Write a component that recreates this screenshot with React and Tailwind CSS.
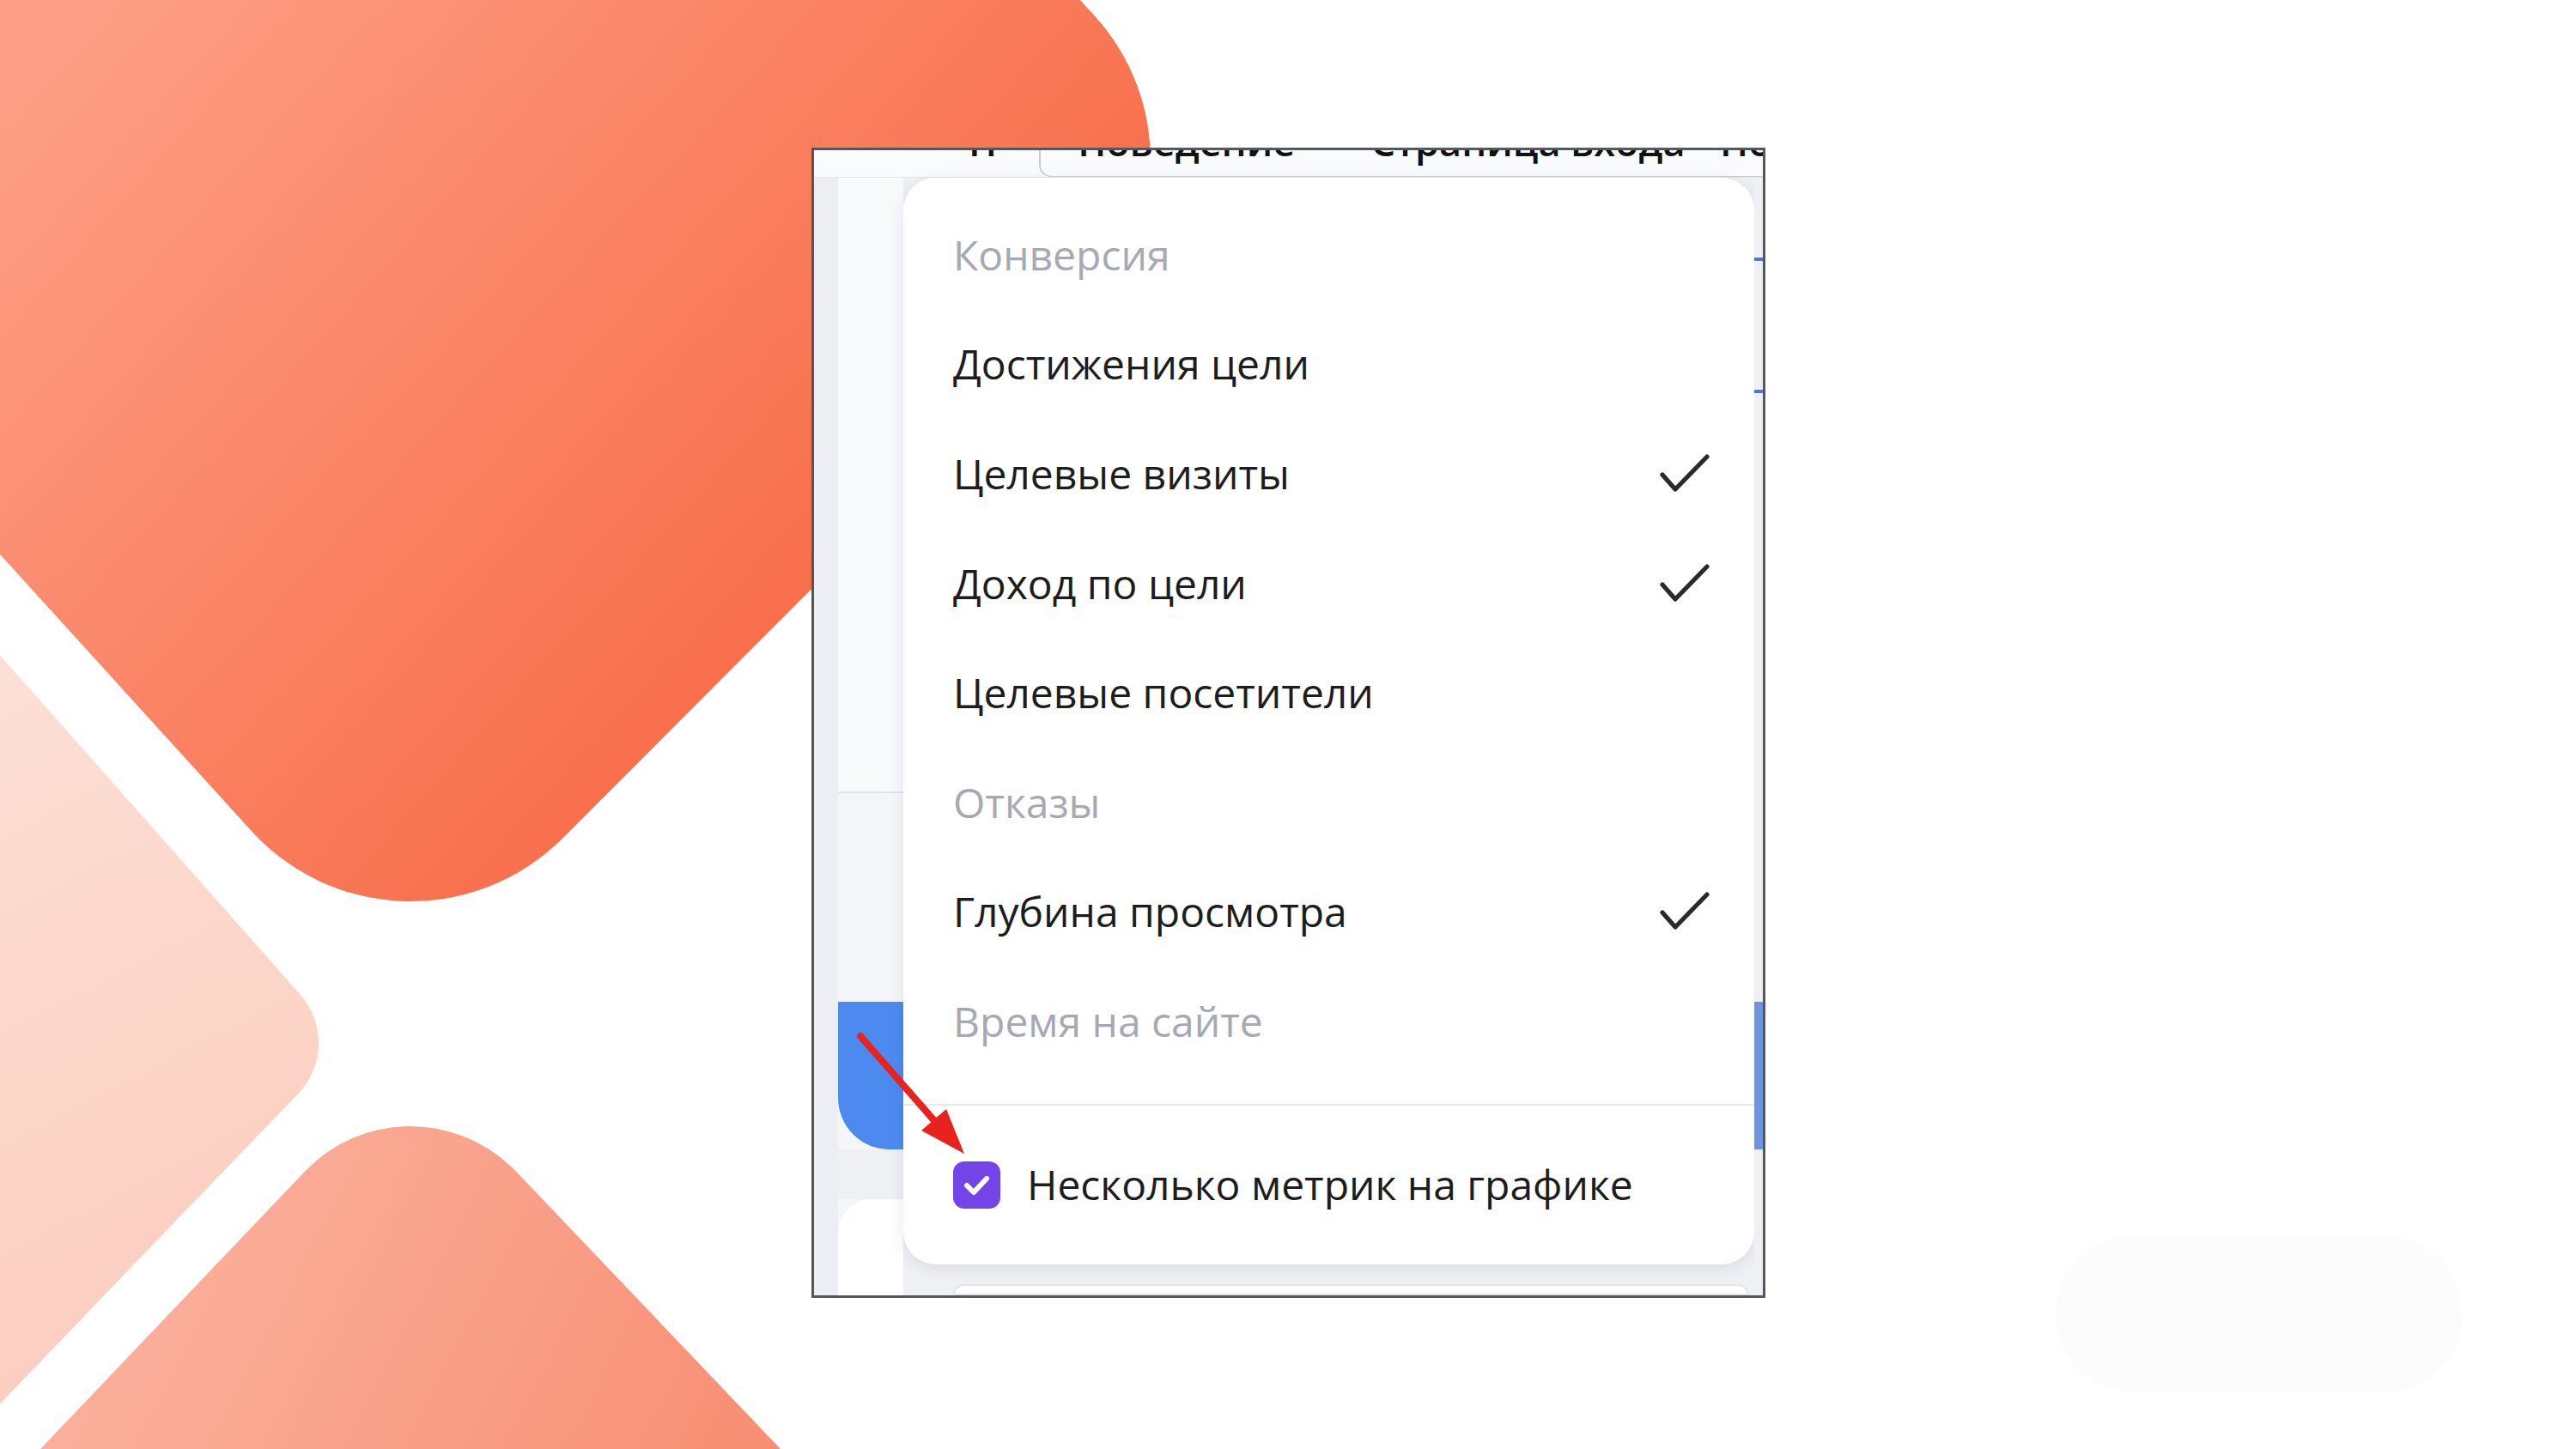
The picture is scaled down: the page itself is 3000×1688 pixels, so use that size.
import React from "react";

const items = [
  { t: "Конверсия", h: true },
  { t: "Достижения цели" },
  { t: "Целевые визиты", c: true },
  { t: "Доход по цели", c: true },
  { t: "Целевые посетители" },
  { t: "Отказы", h: true },
  { t: "Глубина просмотра", c: true },
  { t: "Время на сайте", h: true },
];

function Check() {
  return (
    <svg width="58" height="48" viewBox="0 0 29 24" fill="none">
      <polyline points="1.5,12.5 9,21 27.5,2" stroke="#2a2a2e" strokeWidth="2.6" strokeLinecap="round" strokeLinejoin="round" />
    </svg>
  );
}

function Background() {
  return (
    <svg className="absolute inset-0" width="3000" height="1688" viewBox="0 0 3000 1688">
      <defs>
        <linearGradient id="g1" gradientUnits="userSpaceOnUse" x1="100" y1="0" x2="1100" y2="900">
          <stop offset="0" stopColor="#fd9f86" />
          <stop offset="1" stopColor="#f7633d" />
        </linearGradient>
        <linearGradient id="g2" gradientUnits="userSpaceOnUse" x1="0" y1="700" x2="420" y2="1500">
          <stop offset="0" stopColor="#fde1d8" />
          <stop offset="1" stopColor="#fbccbe" />
        </linearGradient>
        <linearGradient id="g3" gradientUnits="userSpaceOnUse" x1="150" y1="1300" x2="900" y2="1688">
          <stop offset="0" stopColor="#fbb4a1" />
          <stop offset="1" stopColor="#f78e72" />
        </linearGradient>
      </defs>
      <polygon points="478,800 1090,187 81,-923 -531,-310" fill="url(#g1)" stroke="url(#g1)" strokeWidth="500" strokeLinejoin="round" />
      <polygon points="286,1215 -662,143 -1500,1215 -659,2198" fill="url(#g2)" stroke="url(#g2)" strokeWidth="170" strokeLinejoin="round" />
      <polygon points="478,1482 1478,2532 -522,2532" fill="url(#g3)" stroke="url(#g3)" strokeWidth="340" strokeLinejoin="round" />
      <rect x="2394" y="1440" width="474" height="182" rx="90" fill="#fcfcfc" />
    </svg>
  );
}

const crumb = "text-[45px] leading-[46px] font-semibold -mt-[33px]";

export default function App() {
  return (
    <div className="relative w-[3000px] h-[1688px] overflow-hidden bg-white font-['Open_Sans','Noto_Sans',sans-serif]">
      <Background />
      <div className="relative pl-[945px] pt-[172px]">
        <div className="w-[1111px] h-[1340px] border-[3px] border-[#54585c] bg-[#eef0f4] flex flex-col overflow-hidden">
          {/* top band with cut-off breadcrumb */}
          <div className="h-[32px] shrink-0 bg-[#fafbfc] border-b border-[#e3e5e9] flex overflow-hidden pl-[180px]">
            <span className={crumb + " text-[#111]"}>П</span>
            <div className="ml-[49px] h-[31px] border-l-2 border-b border-[#c9ccd1] rounded-bl-[14px] pl-[43px] flex whitespace-nowrap">
              <span className={crumb + " text-[#111]"}>Поведение</span>
              <span className={crumb + " text-[#888] ml-[38px]"}>·</span>
              <span className={crumb + " text-[#111] ml-[38px]"}>Страница входа</span>
              <span className={crumb + " text-[#888] ml-[14px]"}>·</span>
              <span className={crumb + " text-[#111] ml-[14px]"}>По</span>
            </div>
          </div>

          <div className="flex flex-1 min-h-0">
            {/* left strip */}
            <div className="w-[104px] shrink-0 flex">
              <div className="w-[28px] bg-[#eceef3]" />
              <div className="w-[76px] flex flex-col bg-[#f5f6f9]">
                <div className="h-[717px] shrink-0 bg-[#f8f9fb] border-b-2 border-[#e1e3e8]" />
                <div className="h-[243px] shrink-0" />
                <div className="h-[172px] shrink-0 bg-[#4d8af0] rounded-bl-[60px]" />
                <div className="h-[58px] shrink-0 bg-[#eef0f4]" />
                <div className="flex-1 bg-white rounded-tl-[40px]" />
              </div>
            </div>

            {/* card column */}
            <div className="w-[991px] shrink-0 flex flex-col">
              <div className="h-[1266px] shrink-0 bg-white rounded-[38px] shadow-[0_4px_18px_rgba(40,50,80,0.10)] flex flex-col pt-[26px]">
                {items.map((it) => (
                  <div key={it.t} className="h-[127.6px] shrink-0 flex items-center justify-between pl-[58px] pr-[52px]">
                    <span className={"text-[48px] font-medium leading-none " + (it.h ? "text-[#a6a9b3]" : "text-[#1d1d20]")}>{it.t}</span>
                    {it.c ? <Check /> : null}
                  </div>
                ))}
                <div className="mt-[32px] border-t-2 border-[#e8e9ed] flex-1 flex items-center pl-[58px]">
                  <div className="w-[55px] h-[55px] rounded-[13px] bg-[#7345e8] flex items-center justify-center">
                    <svg width="55" height="55" viewBox="0 0 55 55" fill="none">
                      <polyline points="16,28 24,36 39,20" stroke="#fff" strokeWidth="6" strokeLinecap="round" strokeLinejoin="round" />
                    </svg>
                  </div>
                  <span className="ml-[31px] text-[48px] font-medium leading-none text-[#1d1d20]">Несколько метрик на графике</span>
                </div>
              </div>
              <div className="mt-[23px] ml-[58px] mr-[6px] flex-1 bg-white border-2 border-[#e3e5ea] rounded-t-[30px]" />
            </div>

            {/* right strip */}
            <div className="flex-1 flex flex-col bg-[#eef0f4]">
              <div className="h-[93px] shrink-0" />
              <div className="h-[4px] shrink-0 bg-[#5b6fd6]" />
              <div className="h-[150px] shrink-0" />
              <div className="h-[4px] shrink-0 bg-[#5b6fd6]" />
              <div className="h-[709px] shrink-0" />
              <div className="h-[172px] shrink-0 bg-[#6d95e0]" />
            </div>
          </div>
        </div>
      </div>

      {/* red annotation arrow */}
      <svg className="absolute left-[990px] top-[1195px]" width="150" height="165" viewBox="990 1195 150 165">
        <line x1="1002" y1="1207" x2="1092" y2="1310" stroke="#e8231f" strokeWidth="8" strokeLinecap="round" />
        <polygon points="1123,1344 1073,1317 1102,1292" fill="#e8231f" />
      </svg>
    </div>
  );
}
